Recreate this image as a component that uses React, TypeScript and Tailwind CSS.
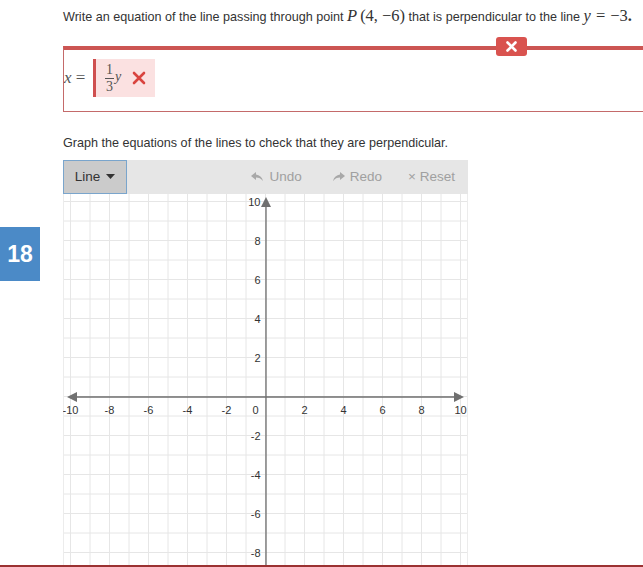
import React from "react";

const UNIT = 19.5;
const C = 202.5;

const Graph = () => {
  const ticks = Array.from({ length: 21 }, (_, i) => i - 10);
  return (
    <svg width={405} height={372} viewBox="0 0 405 372" className="block">
      <rect x={0} y={0} width={405} height={405} fill="#fff" />
      {/* grid */}
      {ticks.map((k) => (
        <line
          key={"v" + k}
          x1={C + k * UNIT}
          x2={C + k * UNIT}
          y1={0}
          y2={405}
          stroke="#e6e6e6"
          strokeWidth={1}
        />
      ))}
      {ticks.map((k) => (
        <line
          key={"h" + k}
          y1={C + k * UNIT}
          y2={C + k * UNIT}
          x1={0}
          x2={405}
          stroke="#e6e6e6"
          strokeWidth={1}
        />
      ))}
      <line x1={0.5} x2={0.5} y1={0} y2={405} stroke="#ececec" />
      <line x1={404.5} x2={404.5} y1={0} y2={405} stroke="#ececec" />
      {/* axes */}
      <line x1={12} x2={393} y1={C + 0.5} y2={C + 0.5} stroke="#6e6e6e" strokeWidth={1.3} />
      <line x1={C + 0.5} x2={C + 0.5} y1={10} y2={405} stroke="#6e6e6e" strokeWidth={1.3} />
      <polygon points="4,203 14,198 14,208" fill="#707070" />
      <polygon points="401,203 391,198 391,208" fill="#707070" />
      <polygon points="203,3 198,13 208,13" fill="#707070" />
      {/* x labels */}
      {ticks
        .filter((k) => k % 2 === 0)
        .map((k) => (
          <text
            key={"xl" + k}
            x={k === 0 ? C - 10 : C + k * UNIT}
            y={C + 17}
            textAnchor="middle"
            fontSize={11}
            fontFamily="'Liberation Sans', Arial, sans-serif"
            fill="#333"
          >
            {k}
          </text>
        ))}
      {/* y labels */}
      {ticks
        .filter((k) => k % 2 === 0 && k !== 0 && k >= -8)
        .map((k) => (
          <text
            key={"yl" + k}
            x={C - 5}
            y={C - k * UNIT + 4}
            textAnchor="end"
            fontSize={11}
            fontFamily="'Liberation Sans', Arial, sans-serif"
            fill="#333"
          >
            {k}
          </text>
        ))}
    </svg>
  );
};

export default function App() {
  return (
    <div className="relative w-[643px] h-[567px] overflow-hidden bg-white text-[#333] font-['Liberation_Sans',Arial,sans-serif]">
      {/* question number */}
      <div className="absolute left-0 top-[227px] w-[40px] h-[54px] bg-[#4b8ac7] flex items-center justify-center text-white text-[23px] font-bold">
        18
      </div>

      <div className="pl-[63px] pt-[7px]">
        <p className="text-[12.6px] leading-[18px] whitespace-nowrap">
          Write an equation of the line passing through point{" "}
          <span className="font-['Liberation_Serif',serif] text-[16.5px]">
            <i>P</i>
            <span className="ml-[3px]">(4,</span>
            <span className="ml-[4px]">−6)</span>
          </span>{" "}
          that is perpendicular to the line{" "}
          <span className="font-['Liberation_Serif',serif] text-[16.5px]">
            <i>y</i>
            <span className="mx-[5px]">=</span>−3
          </span>
          <span className="font-['Liberation_Serif',serif] text-[16.5px] font-bold">.</span>
        </p>

        {/* answer box */}
        <div className="relative mt-[20px] w-[620px] h-[66px] border-t-4 border-l border-b border-t-[#cc5553] border-l-[#c46a6a] border-b-[#c46a6a] flex items-start">
          <div className="absolute left-[432px] -top-[13px] w-[31px] h-[19px] rounded-[3px] bg-[#d9534f] flex items-center justify-center">
            <svg width="11" height="11" viewBox="0 0 11 11">
              <path d="M1.5 1.5 L9.5 9.5 M9.5 1.5 L1.5 9.5" stroke="#fff" strokeWidth="2.6" strokeLinecap="round" />
            </svg>
          </div>
          <div className="flex items-center mt-[9px]">
            <span className="font-['Liberation_Serif',serif] text-[17px] text-[#555] w-[29px] whitespace-nowrap">
              <i>x</i> =
            </span>
            <div className="h-[38px] w-[62px] bg-[#fbe1e1] border-l-[3px] border-[#cf4f4f] flex items-center pl-[9px] gap-[11px]">
              <span className="flex items-center font-['Liberation_Serif',serif] text-[#555]">
                <span className="flex flex-col items-center text-[14px] leading-[14px]">
                  <span>1</span>
                  <span className="w-[9px] border-t border-[#555] my-[1px]" />
                  <span>3</span>
                </span>
                <i className="text-[14px] ml-[1px] mb-[4px]">y</i>
              </span>
              <svg width="14" height="14" viewBox="0 0 14 14">
                <path d="M2 2 L12 12 M12 2 L2 12" stroke="#d9443f" strokeWidth="2.6" strokeLinecap="round" />
              </svg>
            </div>
          </div>
        </div>

        <p className="mt-[22px] text-[12.6px] leading-[18px]">
          Graph the equations of the lines to check that they are perpendicular.
        </p>

        {/* graph tool */}
        <div className="mt-[8px] w-[405px]">
          <div className="h-[34px] bg-[#e6e6e6] flex items-center text-[13.5px]">
            <div className="h-[34px] w-[64px] bg-[#cbcbcb] border border-[#7aa5cc] flex items-center justify-center gap-[6px] text-[#333]">
              Line
              <svg width="9" height="6" viewBox="0 0 9 6">
                <polygon points="0,0 9,0 4.5,5" fill="#333" />
              </svg>
            </div>
            <div className="ml-auto flex items-center text-[#a0a0a0] pr-[13px]">
              <span className="flex items-center gap-[7px]">
                <svg width="12" height="10" viewBox="0 0 12 10">
                  <path d="M5 0 L0 4 L5 8 L5 5.5 C8 5.5 10 6.5 12 9 C11 5 8.5 3 5 2.5 Z" fill="#a8a8a8" />
                </svg>
                Undo
              </span>
              <span className="flex items-center gap-[5px] ml-[31px]">
                <svg width="12" height="10" viewBox="0 0 12 10">
                  <path d="M7 0 L12 4 L7 8 L7 5.5 C4 5.5 2 6.5 0 9 C1 5 3.5 3 7 2.5 Z" fill="#a8a8a8" />
                </svg>
                Redo
              </span>
              <span className="ml-[26px]">× Reset</span>
            </div>
          </div>
          <Graph />
        </div>
      </div>

      {/* bottom edge line */}
      <div className="absolute left-0 bottom-0 w-full h-[2px] bg-[#9b3232]" />
    </div>
  );
}
